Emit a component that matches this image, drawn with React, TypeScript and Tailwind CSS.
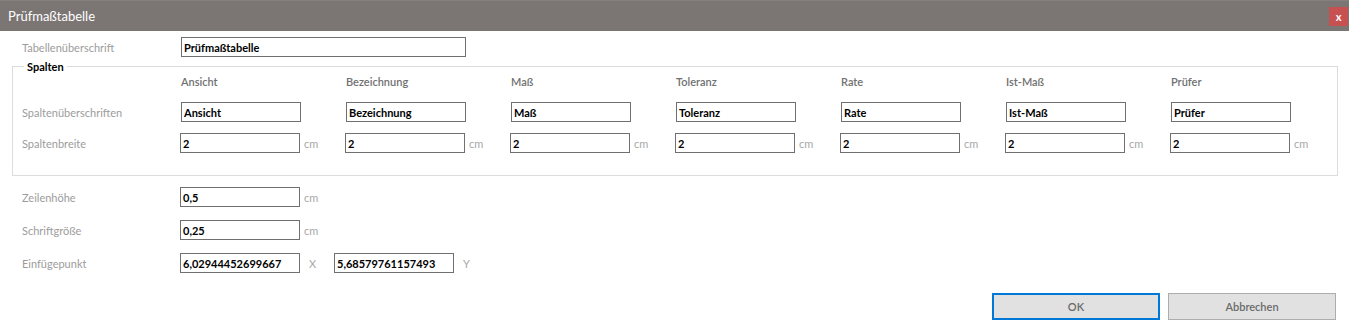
import { ReactNode } from "react";

const columns = [
  "Ansicht",
  "Bezeichnung",
  "Maß",
  "Toleranz",
  "Rate",
  "Ist-Maß",
  "Prüfer",
];

function Field({ value, className = "" }: { value: string; className?: string }) {
  return (
    <div
      className={`h-[20px] w-[120px] border border-[#707070] bg-white pl-[2px] flex items-center text-[11px] font-bold text-black leading-none ${className}`}
    >
      {value}
    </div>
  );
}

function Unit({ children, className = "" }: { children: ReactNode; className?: string }) {
  return (
    <span className={`text-[11px] text-[#a8a8a8] leading-none ${className}`}>{children}</span>
  );
}

function Label({ children, className = "" }: { children: ReactNode; className?: string }) {
  return (
    <div className={`text-[11px] text-[#9c9c9c] leading-none shrink-0 ${className}`}>
      {children}
    </div>
  );
}

export default function App() {
  return (
    <div
      className="w-[1349px] h-[331px] bg-white overflow-hidden flex flex-col leading-none"
      style={{ fontFamily: '"Segoe UI", Lato, "Noto Sans", sans-serif' }}
    >
      <div className="h-[31px] bg-[#7b7574] border-t border-[#858080] flex items-center justify-between pl-[8px] pr-[1px] shrink-0">
        <span className="text-[13px] text-white leading-none">Prüfmaßtabelle</span>
        <button className="w-[19px] h-[19px] bg-[#c75050] text-white text-[11px] font-bold leading-none flex items-center justify-center">
          x
        </button>
      </div>

      <div className="flex items-center pl-[22px] mt-[6px]">
        <Label className="w-[159px]">Tabellenüberschrift</Label>
        <Field value="Prüfmaßtabelle" className="w-[285px]" />
      </div>

      <fieldset className="mx-[12px] mt-[3px] w-[1326px] h-[116px] border border-[#dcdcdc] pl-[9px]">
        <legend className="ml-[2px] px-[3px] text-[11px] font-bold text-black leading-[13px]">
          Spalten
        </legend>
        <div className="flex items-center h-[14px] mt-[1px] pl-[159px]">
          {columns.map((c) => (
            <div key={c} className="w-[165px] text-[11px] font-semibold text-[#707070] leading-none">
              {c}
            </div>
          ))}
        </div>
        <div className="flex items-center mt-[14px]">
          <Label className="w-[159px]">Spaltenüberschriften</Label>
          {columns.map((c) => (
            <div key={c} className="w-[165px]">
              <Field value={c} />
            </div>
          ))}
        </div>
        <div className="flex items-center mt-[11px]">
          <Label className="w-[158px]">Spaltenbreite</Label>
          {columns.map((c) => (
            <div key={c} className="w-[165px] flex items-center gap-[4px]">
              <Field value="2" />
              <Unit>cm</Unit>
            </div>
          ))}
        </div>
      </fieldset>

      <div className="flex flex-col gap-[13px] pl-[22px] mt-[11px]">
        <div className="flex items-center">
          <Label className="w-[158px]">Zeilenhöhe</Label>
          <Field value="0,5" />
          <Unit className="ml-[4px]">cm</Unit>
        </div>
        <div className="flex items-center">
          <Label className="w-[158px]">Schriftgröße</Label>
          <Field value="0,25" />
          <Unit className="ml-[4px]">cm</Unit>
        </div>
        <div className="flex items-center">
          <Label className="w-[158px]">Einfügepunkt</Label>
          <Field value="6,02944452699667" />
          <Unit className="ml-[9px] w-[25px]">X</Unit>
          <Field value="5,68579761157493" />
          <Unit className="ml-[9px]">Y</Unit>
        </div>
      </div>

      <div className="flex justify-end gap-[8px] pr-[13px] mt-[20px]">
        <button className="w-[168px] h-[27px] bg-[#e1e1e1] border-2 border-[#0078d7] text-[11px] font-semibold text-[#6a6a6a]">
          OK
        </button>
        <button className="w-[168px] h-[27px] bg-[#e1e1e1] border border-[#adadad] text-[11px] font-semibold text-[#6a6a6a]">
          Abbrechen
        </button>
      </div>
    </div>
  );
}
